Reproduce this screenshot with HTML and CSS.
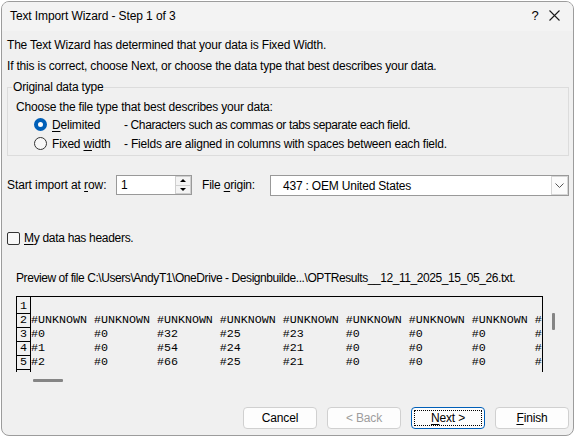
FILE: index.html
```html
<!DOCTYPE html>
<html lang="en">
<head>
<meta charset="utf-8">
<title>Text Import Wizard - Step 1 of 3</title>
<link rel="stylesheet" href="styles.css">
</head>
<body>
<div class="window">
  <div class="titlebar">
    <span class="title">Text Import Wizard - Step 1 of 3</span>
    <span class="help">?</span>
    <span class="close"><svg width="11" height="11" viewBox="0 0 11 11"><path d="M0.5 0.5 L10.5 10.5 M10.5 0.5 L0.5 10.5" stroke="#1a1a1a" stroke-width="1.1" fill="none"/></svg></span>
  </div>
  <div class="content">
    <p class="intro first">The Text Wizard has determined that your data is Fixed Width.</p>
    <p class="intro">If this is correct, choose Next, or choose the data type that best describes your data.</p>

    <fieldset class="group">
      <legend>Original data type</legend>
      <div class="choose">Choose the file type that best describes your data:</div>
      <div class="radio-row">
        <span class="radio on"></span>
        <span class="rlabel"><u>D</u>elimited</span>
        <span class="desc delim">- Characters such as commas or tabs separate each field.</span>
      </div>
      <div class="radio-row">
        <span class="radio"></span>
        <span class="rlabel">Fixed <u>w</u>idth</span>
        <span class="desc fixed">- Fields are aligned in columns with spaces between each field.</span>
      </div>
    </fieldset>

    <div class="import-row">
      <span class="lbl-start">Start import at <u>r</u>ow:</span>
      <div class="spin">
        <span class="spin-value">1</span>
        <span class="spin-btns">
          <span class="spin-btn"><span class="tri up"></span></span>
          <span class="spin-btn"><span class="tri down"></span></span>
        </span>
      </div>
      <span class="lbl-origin">File <u>o</u>rigin:</span>
      <div class="combo">
        <span class="combo-value">437 : OEM United States</span>
        <span class="combo-btn"><svg width="9" height="5" viewBox="0 0 9 5"><path d="M0.5 0.5 L4.5 4.5 L8.5 0.5" stroke="#555" stroke-width="1" fill="none"/></svg></span>
      </div>
    </div>

    <div class="check-row">
      <span class="checkbox"></span>
      <span class="check-label"><u>M</u>y data has headers.</span>
    </div>

    <div class="preview-label">Preview of file C:\Users\AndyT1\OneDrive - Designbuilde...\OPTResults__12_11_2025_15_05_26.txt.</div>

    <div class="preview">
      <div class="grid">
        <div class="row r1"><span class="num">1</span><span class="data"></span></div>
        <div class="row"><span class="num">2</span><span class="data">#UNKNOWN #UNKNOWN #UNKNOWN #UNKNOWN #UNKNOWN #UNKNOWN #UNKNOWN #UNKNOWN #</span></div>
        <div class="row"><span class="num">3</span><span class="data">#0       #0       #32      #25      #23      #0       #0       #0       #</span></div>
        <div class="row"><span class="num">4</span><span class="data">#1       #0       #54      #24      #21      #0       #0       #0       #</span></div>
        <div class="row"><span class="num">5</span><span class="data">#2       #0       #66      #25      #21      #0       #0       #0       #</span></div>
        <div class="row"><span class="num"></span><span class="data"></span></div>
      </div>
      <div class="vscroll"><span class="vthumb"></span></div>
    </div>
    <div class="hscroll"><span class="hthumb"></span></div>

    <div class="buttons">
      <button class="btn">Cancel</button>
      <button class="btn" disabled>&lt; Back</button>
      <button class="btn default"><span class="focus"><u>N</u>ext &gt;</span></button>
      <button class="btn"><u>F</u>inish</button>
    </div>
  </div>
</div>
</body>
</html>
```
FILE: styles.css
```css
* { box-sizing: border-box; }

body {
  margin: 0;
  background: #ffffff;
  font-family: "Liberation Sans", Arial, sans-serif;
  font-size: 12px;
  letter-spacing: -0.2px;
  color: #000;
}

u { text-decoration: underline; text-underline-offset: 2px; }

.window {
  margin: 1px 0 0 1px;
  width: 573px;
  height: 435px;
  border: 1px solid #9c9c9c;
  border-radius: 8px;
  background: #f0f0f0;
  overflow: hidden;
  display: flex;
  flex-direction: column;
}

.titlebar {
  height: 29px;
  flex: none;
  background: #f3f3f3;
  display: flex;
  align-items: center;
  padding: 0 0 2px 8px;
}
.title { flex: 1; letter-spacing: -0.1px; }
.help {
  width: 10px;
  text-align: center;
  font-size: 13px;
  margin-right: 6px;
}
.close {
  width: 16px;
  height: 16px;
  display: flex;
  align-items: center;
  justify-content: center;
  margin-right: 11px;
}

.content {
  flex: 1;
  padding: 0 4px 0 5px;
  display: flex;
  flex-direction: column;
}

.intro {
  margin: 5px 0 0 0;
  line-height: 16px;
}
.intro.first { margin-top: 6px; }

.group {
  margin: 5px 0 0 0;
  padding: 0 0 2px 4px;
  border: 1px solid #dcdcdc;
  min-width: 0;
}
.group legend {
  padding: 0 1px;
  line-height: 16px;
}
.choose {
  margin: 4px 0 0 4px;
  line-height: 16px;
}
.radio-row {
  height: 19px;
  display: flex;
  align-items: center;
  padding-left: 22px;
}
.radio {
  width: 13px;
  height: 13px;
  border-radius: 50%;
  border: 1px solid #333;
  background: #f7f7f7;
  flex: none;
}
.radio.on {
  border: 4px solid #005fb8;
  background: #fff;
}
.rlabel {
  margin-left: 5px;
  width: 72px;
  flex: none;
}
.desc.delim { letter-spacing: -0.38px; }
.desc.fixed { letter-spacing: -0.2px; }

.import-row {
  margin-top: 19px;
  display: flex;
  align-items: flex-start;
  height: 21px;
}
.lbl-start {
  width: 109px;
  line-height: 21px;
  flex: none;
  letter-spacing: -0.1px;
}
.spin {
  width: 76px;
  height: 20px;
  border: 1px solid #999;
  background: #fff;
  display: flex;
  flex: none;
}
.spin-value {
  flex: 1;
  padding-left: 4px;
  line-height: 18px;
}
.spin-btns {
  width: 16px;
  display: flex;
  flex-direction: column;
}
.spin-btn {
  flex: 1;
  border: 1px solid #cfcfcf;
  background: #f4f4f4;
  display: flex;
  align-items: center;
  justify-content: center;
}
.spin-btn + .spin-btn { border-top: none; }
.tri {
  width: 0;
  height: 0;
  border-left: 3px solid transparent;
  border-right: 3px solid transparent;
}
.tri.up { border-bottom: 3px solid #000; }
.tri.down { border-top: 3px solid #000; }

.lbl-origin {
  margin-left: 10px;
  width: 68px;
  line-height: 21px;
  flex: none;
}
.combo {
  flex: 1;
  height: 21px;
  border: 1px solid #999;
  background: #fff;
  display: flex;
  align-items: center;
}
.combo-value {
  flex: 1;
  padding-left: 12px;
}
.combo-btn {
  width: 17px;
  height: 19px;
  border: 1px solid #d6d6d6;
  background: #fbfbfb;
  display: flex;
  align-items: center;
  justify-content: center;
}

.check-row {
  margin-top: 34px;
  height: 16px;
  display: flex;
  align-items: center;
}
.checkbox {
  width: 13px;
  height: 13px;
  border: 1px solid #333;
  border-radius: 2px;
  background: #f7f7f7;
  flex: none;
}
.check-label { margin-left: 4px; letter-spacing: -0.3px; }

.preview-label {
  margin: 24px 0 0 9px;
  line-height: 16px;
  white-space: nowrap;
  letter-spacing: -0.43px;
}

.preview {
  margin: 10px 0 0 9px;
  display: flex;
  height: 76px;
}
.grid {
  width: 527px;
  height: 76px;
  border: 1px solid #000;
  border-bottom: none;
  overflow: hidden;
  font-family: "Liberation Mono", "Courier New", monospace;
  font-size: 11.67px;
  letter-spacing: 0;
  flex: none;
}
.row {
  display: flex;
  height: 14px;
}
.row.r1 { height: 17px; }
.num {
  width: 14px;
  flex: none;
  border-right: 1px solid #000;
  border-bottom: 1px solid #000;
  text-align: center;
  line-height: 13px;
}
.r1 .num { padding-top: 3px; }
.data {
  white-space: pre;
  line-height: 13px;
}
.r1 .data { padding-top: 3px; }
.vscroll {
  flex: 1;
  padding: 17px 0 0 9px;
}
.vthumb {
  display: block;
  width: 3px;
  height: 17px;
  background: #858585;
  border-radius: 1px;
}
.hscroll {
  height: 14px;
  padding: 7px 0 0 26px;
}
.hthumb {
  display: block;
  width: 30px;
  height: 3px;
  background: #858585;
  border-radius: 1px;
}

.buttons {
  margin-top: 21px;
  display: flex;
  justify-content: flex-end;
  gap: 10px;
}
.btn {
  width: 74px;
  height: 22px;
  border: 1px solid #d0d0d0;
  border-radius: 4px;
  background: #fdfdfd;
  font-family: "Liberation Sans", Arial, sans-serif;
  font-size: 12px;
  letter-spacing: -0.15px;
  color: #000;
  padding: 0;
}
.btn:disabled { color: #9d9d9d; }
.btn.default {
  border-color: #005fb8;
  padding: 2px;
}
.focus {
  display: flex;
  align-items: center;
  justify-content: center;
  height: 100%;
  border: 1px dotted #000;
}
```
